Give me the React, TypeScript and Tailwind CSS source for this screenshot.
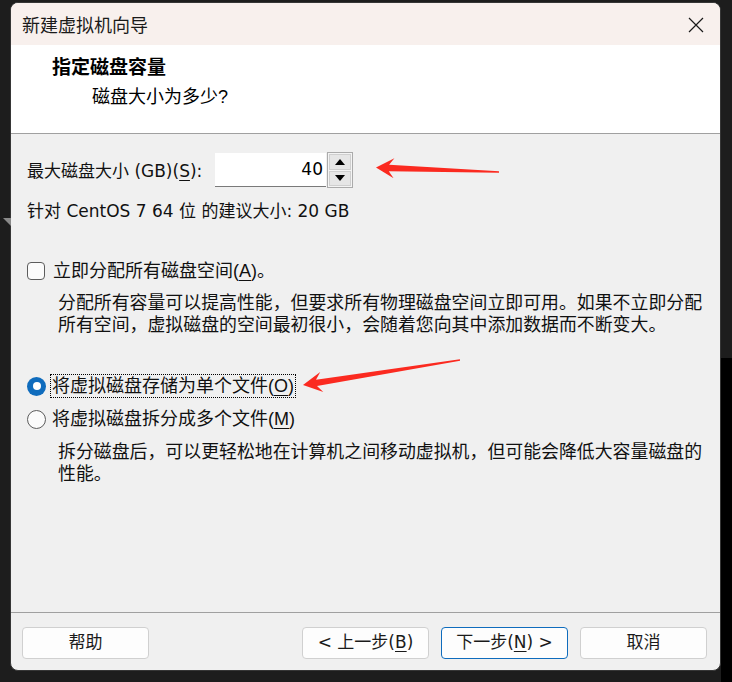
import React from "react";

type P = [number, number];

function arrowPoints(tip: P, tail: P, L: number, W: number, w1: number, w2: number): string {
  const dx = tail[0] - tip[0];
  const dy = tail[1] - tip[1];
  const len = Math.hypot(dx, dy);
  const ux = dx / len;
  const uy = dy / len;
  const nx = -uy;
  const ny = ux;
  const k = L * 0.72;
  const pts: P[] = [
    tip,
    [tip[0] + ux * L + nx * W, tip[1] + uy * L + ny * W],
    [tip[0] + ux * k + nx * w1, tip[1] + uy * k + ny * w1],
    [tail[0] + nx * w2, tail[1] + ny * w2],
    [tail[0] - nx * w2, tail[1] - ny * w2],
    [tip[0] + ux * k - nx * w1, tip[1] + uy * k - ny * w1],
    [tip[0] + ux * L - nx * W, tip[1] + uy * L - ny * W],
  ];
  return pts.map((p) => `${p[0].toFixed(1)},${p[1].toFixed(1)}`).join(" ");
}

const U = ({ children }: { children: React.ReactNode }) => (
  <span className="underline underline-offset-[3px] decoration-1">{children}</span>
);

function Btn({ children, primary }: { children: React.ReactNode; primary?: boolean }) {
  return (
    <div
      className={
        "w-[127px] h-[32px] rounded-[4px] bg-[#fdfdfd] flex items-center justify-center text-[17px] text-[#1a1a1a] font-['DejaVu_Sans','Noto_Sans_CJK_SC',sans-serif] border " +
        (primary ? "border-[#0f6cbd]" : "border-[#d0d0d0]")
      }
    >
      {children}
    </div>
  );
}

export default function App() {
  return (
    <div className="relative w-[732px] h-[682px] bg-[#1d1d1d] overflow-hidden">
      {/* desktop decoration behind the window */}
      <div className="absolute right-0 top-[358px] w-[11px] h-[324px] bg-black" />
      <svg className="absolute left-[3px] top-[218px]" width="8" height="8" viewBox="0 0 8 8">
        <polygon points="0,0 8,0 8,8" fill="#8a8a8a" />
      </svg>

      <div className="pl-[10px] pt-[2px]">
        <div className="w-[711px] h-[669px] rounded-[8px] border border-[#363636] overflow-hidden flex flex-col bg-[#f0f0f0]">
          {/* title bar */}
          <div className="h-[42px] shrink-0 bg-[#f8f0ed] flex items-center justify-between pl-[11px] pr-[16px]">
            <span className="text-[18px] leading-[24px] text-[#1a1a1a] font-['Noto_Sans_CJK_SC',sans-serif]">
              新建虚拟机向导
            </span>
            <svg width="16" height="16" viewBox="0 0 16 16" className="mt-[1px]">
              <path d="M1 1 L15 15 M15 1 L1 15" stroke="#1a1a1a" strokeWidth="1.2" fill="none" />
            </svg>
          </div>

          {/* header */}
          <div className="h-[89px] shrink-0 bg-white border-b border-[#a0a0a0] pl-[41px] pt-[10px] font-['Liberation_Sans','Noto_Sans_CJK_SC',sans-serif] text-black">
            <div className="text-[19px] leading-[26px] font-bold">指定磁盘容量</div>
            <div className="text-[18px] leading-[26px] mt-[3px] pl-[40px]">磁盘大小为多少?</div>
          </div>

          {/* body */}
          <div className="flex-1 pl-[16px] text-[#111]">
            <div className="flex items-center h-[36px] mt-[18px] font-['DejaVu_Sans','Noto_Sans_CJK_SC',sans-serif] text-[17px]">
              <div className="w-[188px] leading-[24px] mt-[1px]">
                最大磁盘大小 (GB)(<U>S</U>):
              </div>
              <div className="w-[111px] h-[34px] bg-white border-b border-[#7a7a7a] flex items-center justify-end pr-[3px] text-[17px] text-black">
                40
              </div>
              <div className="ml-[1px] w-[26px] h-[36px] border border-[#ababab] bg-[#f4f4f4] p-[1px] flex flex-col gap-[1px]">
                <div className="flex-1 bg-[#e6e6e6] border border-[#cfcfcf] flex items-center justify-center">
                  <svg width="10" height="6" viewBox="0 0 10 6">
                    <polygon points="5,0 10,6 0,6" fill="#000" />
                  </svg>
                </div>
                <div className="flex-1 bg-[#e6e6e6] border border-[#cfcfcf] flex items-center justify-center">
                  <svg width="10" height="6" viewBox="0 0 10 6">
                    <polygon points="0,0 10,0 5,6" fill="#000" />
                  </svg>
                </div>
              </div>
            </div>

            <div className="mt-[11px] leading-[24px] text-[17px] font-['DejaVu_Sans','Noto_Sans_CJK_SC',sans-serif]">
              针对 CentOS 7 64 位 的建议大小: 20 GB
            </div>

            <div className="font-['Liberation_Sans','Noto_Sans_CJK_SC',sans-serif] text-[18px]">
              <div className="mt-[36px] h-[24px] flex items-center">
                <div className="w-[18px] h-[18px] rounded-[4px] border border-[#5c5c5c] bg-[#fbfbfb]" />
                <span className="ml-[8px] leading-[24px]">
                  立即分配所有磁盘空间(<U>A</U>)。
                </span>
              </div>
              <div className="mt-[9px] pl-[31px] leading-[22px] text-[17.9px]">
                分配所有容量可以提高性能，但要求所有物理磁盘空间立即可用。如果不立即分配
                <br />
                所有空间，虚拟磁盘的空间最初很小，会随着您向其中添加数据而不断变大。
              </div>

              <div className="mt-[38px] h-[24px] flex items-center">
                <div className="w-[19px] h-[19px] rounded-full bg-[#0f6cbd] flex items-center justify-center">
                  <div className="w-[8px] h-[8px] rounded-full bg-white" />
                </div>
                <span className="ml-[5px] h-[22px] flex items-center pl-[1px] pr-[1px] outline-1 outline-dotted outline-black leading-[22px]">
                  将虚拟磁盘存储为单个文件(<U>O</U>)
                </span>
              </div>
              <div className="mt-[9px] h-[24px] flex items-center">
                <div className="w-[19px] h-[19px] rounded-full border border-[#5c5c5c] bg-[#fbfbfb]" />
                <span className="ml-[6px] leading-[24px]">
                  将虚拟磁盘拆分成多个文件(<U>M</U>)
                </span>
              </div>
              <div className="mt-[10px] pl-[31px] leading-[22px] text-[17.9px]">
                拆分磁盘后，可以更轻松地在计算机之间移动虚拟机，但可能会降低大容量磁盘的
                <br />
                性能。
              </div>
            </div>
          </div>

          {/* footer */}
          <div className="h-[58px] shrink-0 border-t border-[#a0a0a0] flex items-start pt-[14px] pl-[11px] pr-[13px]">
            <Btn>帮助</Btn>
            <div className="flex-1" />
            <div className="flex gap-[12px]">
              <Btn>&lt; 上一步(<U>B</U>)</Btn>
              <Btn primary>下一步(<U>N</U>) &gt;</Btn>
              <Btn>取消</Btn>
            </div>
          </div>
        </div>
      </div>

      {/* annotation arrows */}
      <svg className="absolute left-0 top-0 pointer-events-none" width="732" height="682" viewBox="0 0 732 682">
        <polygon points={arrowPoints([376, 167.5], [499, 172], 18, 10, 3.2, 0.8)} fill="#fb2a20" />
        <polygon points={arrowPoints([303, 385], [460, 360], 19, 10, 3.2, 0.8)} fill="#fb2a20" />
      </svg>
    </div>
  );
}
